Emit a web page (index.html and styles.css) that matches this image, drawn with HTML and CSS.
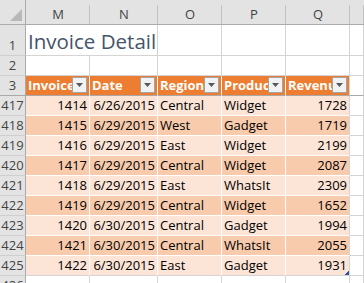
FILE: index.html
```html
<!DOCTYPE html>
<html>
<head>
<meta charset="utf-8">
<link rel="stylesheet" href="styles.css">
</head>
<body>
<div class="sheet">
  <div class="corner"><svg width="13" height="13" viewBox="0 0 13 13"><path d="M0 12H12V0Z" fill="#b8b8b8"/></svg></div>
  <div class="hd">M</div><div class="hd">N</div><div class="hd">O</div><div class="hd">P</div><div class="hd">Q</div><div class="hd"></div>

  <div class="rh rh-tall">1</div>
  <div class="c title">Invoice Detail</div>
  <div class="c"></div><div class="c"></div><div class="c"></div><div class="c"></div>

  <div class="rh">2</div>
  <div class="c"></div><div class="c"></div><div class="c"></div><div class="c"></div><div class="c"></div><div class="c"></div>

  <div class="rh frz">3</div>
  <div class="th frz"><span class="lbl">Invoice</span><span class="fb"><svg width="7" height="4" viewBox="0 0 7 4"><path d="M0 0H7L3.5 4Z" fill="#595959"/></svg></span></div>
  <div class="th frz"><span class="lbl">Date</span><span class="fb"><svg width="7" height="4" viewBox="0 0 7 4"><path d="M0 0H7L3.5 4Z" fill="#595959"/></svg></span></div>
  <div class="th frz"><span class="lbl">Region</span><span class="fb"><svg width="7" height="4" viewBox="0 0 7 4"><path d="M0 0H7L3.5 4Z" fill="#595959"/></svg></span></div>
  <div class="th frz"><span class="lbl">Product</span><span class="fb"><svg width="7" height="4" viewBox="0 0 7 4"><path d="M0 0H7L3.5 4Z" fill="#595959"/></svg></span></div>
  <div class="th frz last"><span class="lbl">Revenue</span><span class="fb"><svg width="7" height="4" viewBox="0 0 7 4"><path d="M0 0H7L3.5 4Z" fill="#595959"/></svg></span></div>
  <div class="c frz"></div>

  <div class="rh">417</div>
  <div class="t lt num">1414</div><div class="t lt num">6/26/2015</div><div class="t lt">Central</div><div class="t lt">Widget</div><div class="t lt num last">1728</div><div class="c"></div>

  <div class="rh">418</div>
  <div class="t dk num">1415</div><div class="t dk num">6/29/2015</div><div class="t dk">West</div><div class="t dk">Gadget</div><div class="t dk num last">1719</div><div class="c"></div>

  <div class="rh">419</div>
  <div class="t lt num">1416</div><div class="t lt num">6/29/2015</div><div class="t lt">East</div><div class="t lt">Widget</div><div class="t lt num last">2199</div><div class="c"></div>

  <div class="rh">420</div>
  <div class="t dk num">1417</div><div class="t dk num">6/29/2015</div><div class="t dk">Central</div><div class="t dk">Widget</div><div class="t dk num last">2087</div><div class="c"></div>

  <div class="rh">421</div>
  <div class="t lt num">1418</div><div class="t lt num">6/29/2015</div><div class="t lt">East</div><div class="t lt">WhatsIt</div><div class="t lt num last">2309</div><div class="c"></div>

  <div class="rh">422</div>
  <div class="t dk num">1419</div><div class="t dk num">6/29/2015</div><div class="t dk">Central</div><div class="t dk">Widget</div><div class="t dk num last">1652</div><div class="c"></div>

  <div class="rh">423</div>
  <div class="t lt num">1420</div><div class="t lt num">6/30/2015</div><div class="t lt">Central</div><div class="t lt">Gadget</div><div class="t lt num last">1994</div><div class="c"></div>

  <div class="rh">424</div>
  <div class="t dk num">1421</div><div class="t dk num">6/30/2015</div><div class="t dk">Central</div><div class="t dk">WhatsIt</div><div class="t dk num last">2055</div><div class="c"></div>

  <div class="rh">425</div>
  <div class="t lt num bot">1422</div><div class="t lt num bot">6/30/2015</div><div class="t lt bot">East</div><div class="t lt bot">Gadget</div><div class="t lt num bot last handle">1931</div><div class="c"></div>

  <div class="rh">426</div>
  <div class="c"></div><div class="c"></div><div class="c"></div><div class="c"></div><div class="c"></div><div class="c"></div>
</div>
</body>
</html>
```
FILE: styles.css
```css
html, body {
  margin: 0;
  padding: 0;
  background: #ffffff;
  overflow: hidden;
}
body {
  font-family: "Open Sans", "DejaVu Sans", sans-serif;
  font-size: 13px;
  color: #000000;
}
.sheet {
  display: grid;
  grid-template-columns: 26px 64px 68px 64px 64px 64px 1fr;
  grid-template-rows: 25px 31px 20px 20px;
  grid-auto-rows: 20px;
  width: 364px;
}
.sheet > div {
  box-sizing: border-box;
  border-right: 1px solid #d4d4d4;
  border-bottom: 1px solid #d4d4d4;
  display: flex;
  align-items: flex-end;
  overflow: hidden;
  white-space: nowrap;
  min-width: 0;
  line-height: 19px;
}
.sheet > .corner {
  background: #e3e3e3;
  border-right: 1px solid #ababab;
  border-bottom: 1px solid #ababab;
  align-items: flex-end;
  justify-content: flex-end;
  padding: 0 2px 2px 0;
}
.corner svg { display: block; }
.sheet > .hd {
  background-color: #e3e3e3;
  background-image: linear-gradient(#c2c2c2, #c2c2c2);
  background-size: 1px 19px;
  background-position: right bottom;
  background-repeat: no-repeat;
  border-right: none;
  border-bottom: 1px solid #ababab;
  justify-content: center;
  color: #444444;
  line-height: 20px;
}
.sheet > .rh {
  background: #e3e3e3;
  border-right: 1px solid #ababab;
  border-bottom: 1px solid #cfcfcf;
  justify-content: center;
  color: #444444;
}
.sheet > .title {
  grid-column: span 2;
  font-size: 20.5px;
  font-weight: 400;
  color: #44546a;
  line-height: normal;
  padding-left: 2px;
  padding-bottom: 0;
}
.sheet > .th {
  background: #ed7d31;
  color: #ffffff;
  font-weight: 700;
  border-right-color: #ffffff;
  padding-left: 2px;
}
.lbl {
  flex: 1 1 auto;
  min-width: 0;
  overflow: hidden;
}
.fb {
  flex: 0 0 15px;
  box-sizing: border-box;
  width: 15px;
  height: 16px;
  align-self: flex-start;
  margin: 1px 2px 0 0;
  border: 1px solid #a3a3a3;
  background: #f1f2f4;
  display: flex;
  align-items: center;
  justify-content: center;
}
.fb svg { display: block; }
.sheet > .frz {
  border-bottom: 1px solid #a9a9a9;
}
.sheet > .t {
  border-right-color: #ffffff;
  border-bottom-color: #ffffff;
  padding: 0 2px;
}
.sheet > .lt { background: #fce4d6; }
.sheet > .dk { background: #f8cbad; }
.sheet > .num { justify-content: flex-end; }
.sheet > .last { border-right-color: #d4d4d4; }
.sheet > .bot { border-bottom-color: #d4d4d4; }
.sheet > .handle { position: relative; }
.handle::after {
  content: "";
  position: absolute;
  right: 0;
  bottom: 0;
  width: 4px;
  height: 4px;
  background: linear-gradient(to bottom right, transparent 45%, #2f55a4 45%);
}
```
